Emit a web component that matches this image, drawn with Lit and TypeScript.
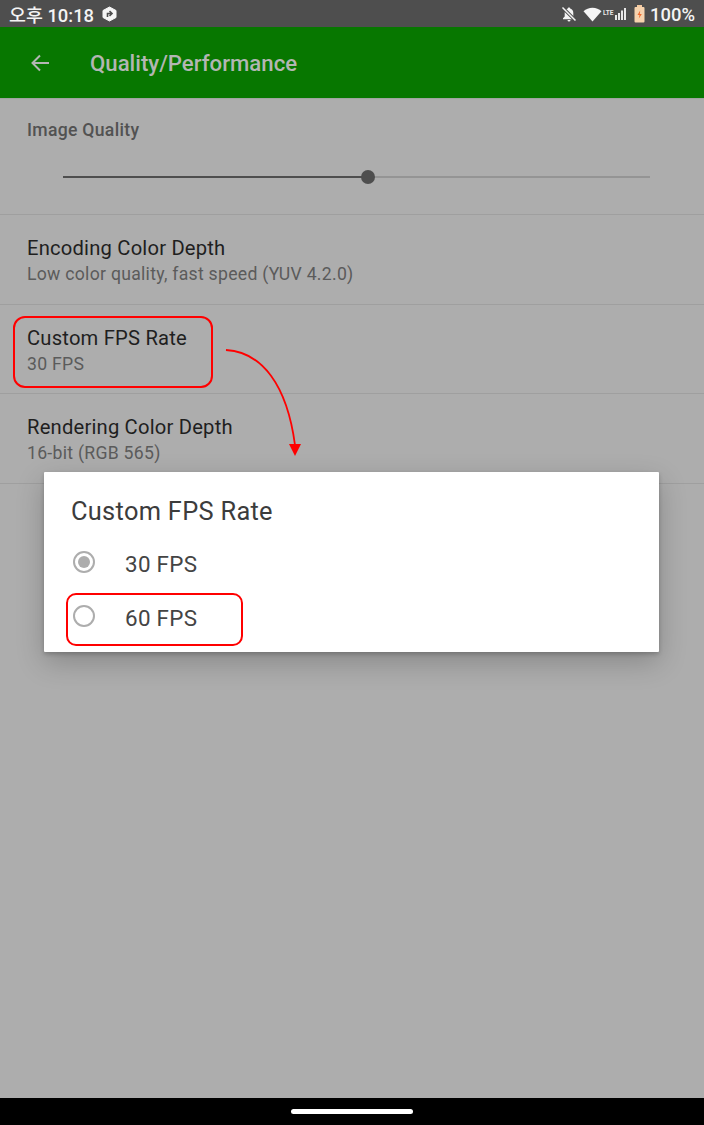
import { LitElement, html, css, svg } from "lit";
import { customElement } from "lit/decorators.js";

@customElement("app-root")
export class AppRoot extends LitElement {
  static styles = css`
    :host { display: block; width: 704px; height: 1125px; position: relative; overflow: hidden; font-family: Roboto, "Noto Sans CJK KR", sans-serif; background: #adadad; }
    .page { display: flex; flex-direction: column; height: 1125px; }
    .status { height: 27px; flex: none; background: #4e4e4e; display: flex; align-items: center; padding: 1px 9px 0; box-sizing: border-box; color: #f4f4f4; font-size: 18.4px; font-weight: 500; justify-content: space-between; }
    .status-left, .status-right { display: flex; align-items: center; }
    .status-left svg { margin-left: 8px; }
    .status-right svg { display: block; }
    .pct { font-size: 18.4px; margin-left: 5px; }
    .bar { height: 71px; flex: none; background: #077700; display: flex; align-items: center; padding: 1px 0 0 30px; color: #b3b6b3; box-sizing: border-box; }
    .bar h1 { margin: 0 0 0 40px; font-size: 22.2px; font-weight: 500; }
    .list { flex: 1; min-height: 0; }
    .row { padding: 0 27px; display: flex; flex-direction: column; border-bottom: 1px solid #9f9f9f; box-sizing: border-box; }
    .quality { height: 117px; border-top: 1px solid #a0a5a0; }
    .quality .label { margin-top: 20px; font-size: 17.6px; font-weight: 500; color: #525252; line-height: 22px; letter-spacing: 0.3px; }
    .track { margin: 29px 27px 0 36px; height: 14px; display: flex; align-items: center; position: relative; }
    .fill { width: 305px; height: 2px; background: #4e4e4e; }
    .rest { flex: 1; height: 2px; background: #949494; }
    .thumb { width: 14px; height: 14px; margin: 0 -7px; border-radius: 50%; background: #4e4e4e; position: relative; }
    .pref { height: 90px; padding-top: 20px; }
    .pref.short { height: 89px; }
    .pref.last { height: 90px; }
    .t { font-size: 20.2px; line-height: 26px; color: #1f1f1f; letter-spacing: 0.2px; }
    .s { margin-top: 1px; font-size: 17.65px; line-height: 24px; color: #5b5b5b; letter-spacing: 0.27px; }
    .nav { height: 27px; flex: none; background: #000; display: flex; align-items: center; justify-content: center; }
    .pill { width: 122px; height: 5px; border-radius: 3px; background: #fff; }
    .dialog { position: absolute; left: 44px; top: 472px; width: 615px; height: 180px; background: #fff; box-sizing: border-box; padding: 25px 27px 0; border-radius: 1px; box-shadow: 0 10px 28px rgba(0,0,0,0.22), 0 2px 4px rgba(0,0,0,0.2); }
    .dialog h2 { margin: 0 0 11px; font-size: 25.4px; line-height: 28px; font-weight: 400; color: #3c3c3c; letter-spacing: 0.3px; }
    .opt { display: flex; align-items: center; height: 54px; font-size: 22.4px; color: #444; letter-spacing: 0.3px; }
    .opt span.label { padding-top: 2px; }
    .radio { width: 22px; height: 22px; margin: -2px 30px 0 2px; box-sizing: border-box; border: 2px solid #adadad; border-radius: 50%; display: flex; align-items: center; justify-content: center; }
    .radio i { width: 12px; height: 12px; border-radius: 50%; background: #adadad; }
    .mark { position: absolute; box-sizing: border-box; border: 2px solid #f00; border-radius: 12px; }
    .m1 { left: 13px; top: 316px; width: 200px; height: 72px; }
    .m2 { left: 66px; top: 593px; width: 177px; height: 53px; border-radius: 10px; }
    .arrow { position: absolute; left: 0; top: 0; pointer-events: none; }
  `;

  render() {
    return html`
      <div class="page">
        <div class="status">
          <div class="status-left">
            <span>오후 10:18</span>
            <svg width="15" height="16" viewBox="0 0 15 16"><path d="M7.5 1 14 4.5v7L7.5 15 1 11.5v-7z" fill="#f6f6f6" stroke="#f6f6f6" stroke-linejoin="round"/><path d="M5.5 11V7.5h3.500M7.5 5.200 10 7.500 7.500 9.800" fill="none" stroke="#4e4e4e" stroke-width="1.600"/></svg>
          </div>
          <div class="status-right">
            <svg width="18" height="18" viewBox="0 0 18 18" style="margin-right:5px"><path d="M9 2.500c-.7 0-1.200.5-1.200 1.100C5.600 4.200 4.700 6 4.700 8v3.600L3 13.300v.9h12v-.9l-1.700-1.700V8c0-2-.9-3.800-3.100-4.400C10.200 3 9.700 2.500 9 2.500zM7.500 15a1.500 1.500 0 0 0 3 0z" fill="#f4f4f4"/><path d="M2.500 2.500 15.500 15.500" stroke="#4e4e4e" stroke-width="3.200"/><path d="M2.500 2.500 15.500 15.500" stroke="#f4f4f4" stroke-width="1.500"/></svg>
            <svg width="19" height="15" viewBox="0 0 19 15" style="margin-right:1px"><path d="M9.500 14.500 .5 4.300C3 2 6 .8 9.500.8s6.500 1.200 9 3.500z" fill="#f6f6f6"/></svg>
            <svg width="25" height="14" viewBox="0 0 25 14" style="margin-right:6px"><text x="0" y="7.500" font-family="Roboto" font-size="6.500" font-weight="700" fill="#e8e8e8">LTE</text><rect x="12" y="8" width="2" height="5" fill="#e8e8e8"/><rect x="15" y="6" width="2" height="7" fill="#e8e8e8"/><rect x="18" y="3.500" width="2" height="9.500" fill="#e8e8e8"/><rect x="21" y="1" width="2" height="12" fill="#e8e8e8"/></svg>
            <svg width="11" height="18" viewBox="0 0 11 18"><rect x="3" y="0" width="5" height="2" fill="#f4c9a0"/><rect x=".5" y="2" width="10" height="15.500" rx="1" fill="#f6d3ae"/><path d="M6.200 5.500 3.500 10h2l-.7 3.500L7.800 9h-2z" fill="#ef6a2e"/></svg>
            <span class="pct">100%</span>
          </div>
        </div>
        <div class="bar">
          <svg width="20" height="20" viewBox="0 0 20 20"><path d="M19 10H3M10 2.500 2.500 10l7.500 7.500" fill="none" stroke="#b3b6b3" stroke-width="2"/></svg>
          <h1>Quality/Performance</h1>
        </div>
        <div class="list">
          <div class="row quality">
            <div class="label">Image Quality</div>
            <div class="track"><div class="fill"></div><div class="thumb"></div><div class="rest"></div></div>
          </div>
          <div class="row pref"><div class="t">Encoding Color Depth</div><div class="s">Low color quality, fast speed (YUV 4.2.0)</div></div>
          <div class="row pref short"><div class="t">Custom FPS Rate</div><div class="s">30 FPS</div></div>
          <div class="row pref last"><div class="t">Rendering Color Depth</div><div class="s">16-bit (RGB 565)</div></div>
        </div>
        <div class="nav"><div class="pill"></div></div>
      </div>
      <div class="dialog">
        <h2>Custom FPS Rate</h2>
        <div class="opt"><span class="radio"><i></i></span><span class="label">30 FPS</span></div>
        <div class="opt"><span class="radio"></span><span class="label">60 FPS</span></div>
      </div>
      <div class="mark m1"></div>
      <div class="mark m2"></div>
      <svg class="arrow" width="704" height="1125" viewBox="0 0 704 1125">${svg`
        <path d="M226 350C262 352 287 385 295 445" fill="none" stroke="#f00" stroke-width="1.800"/>
        <path d="M289 444h12l-6 12z" fill="#f00"/>
      `}</svg>
    `;
  }
}
